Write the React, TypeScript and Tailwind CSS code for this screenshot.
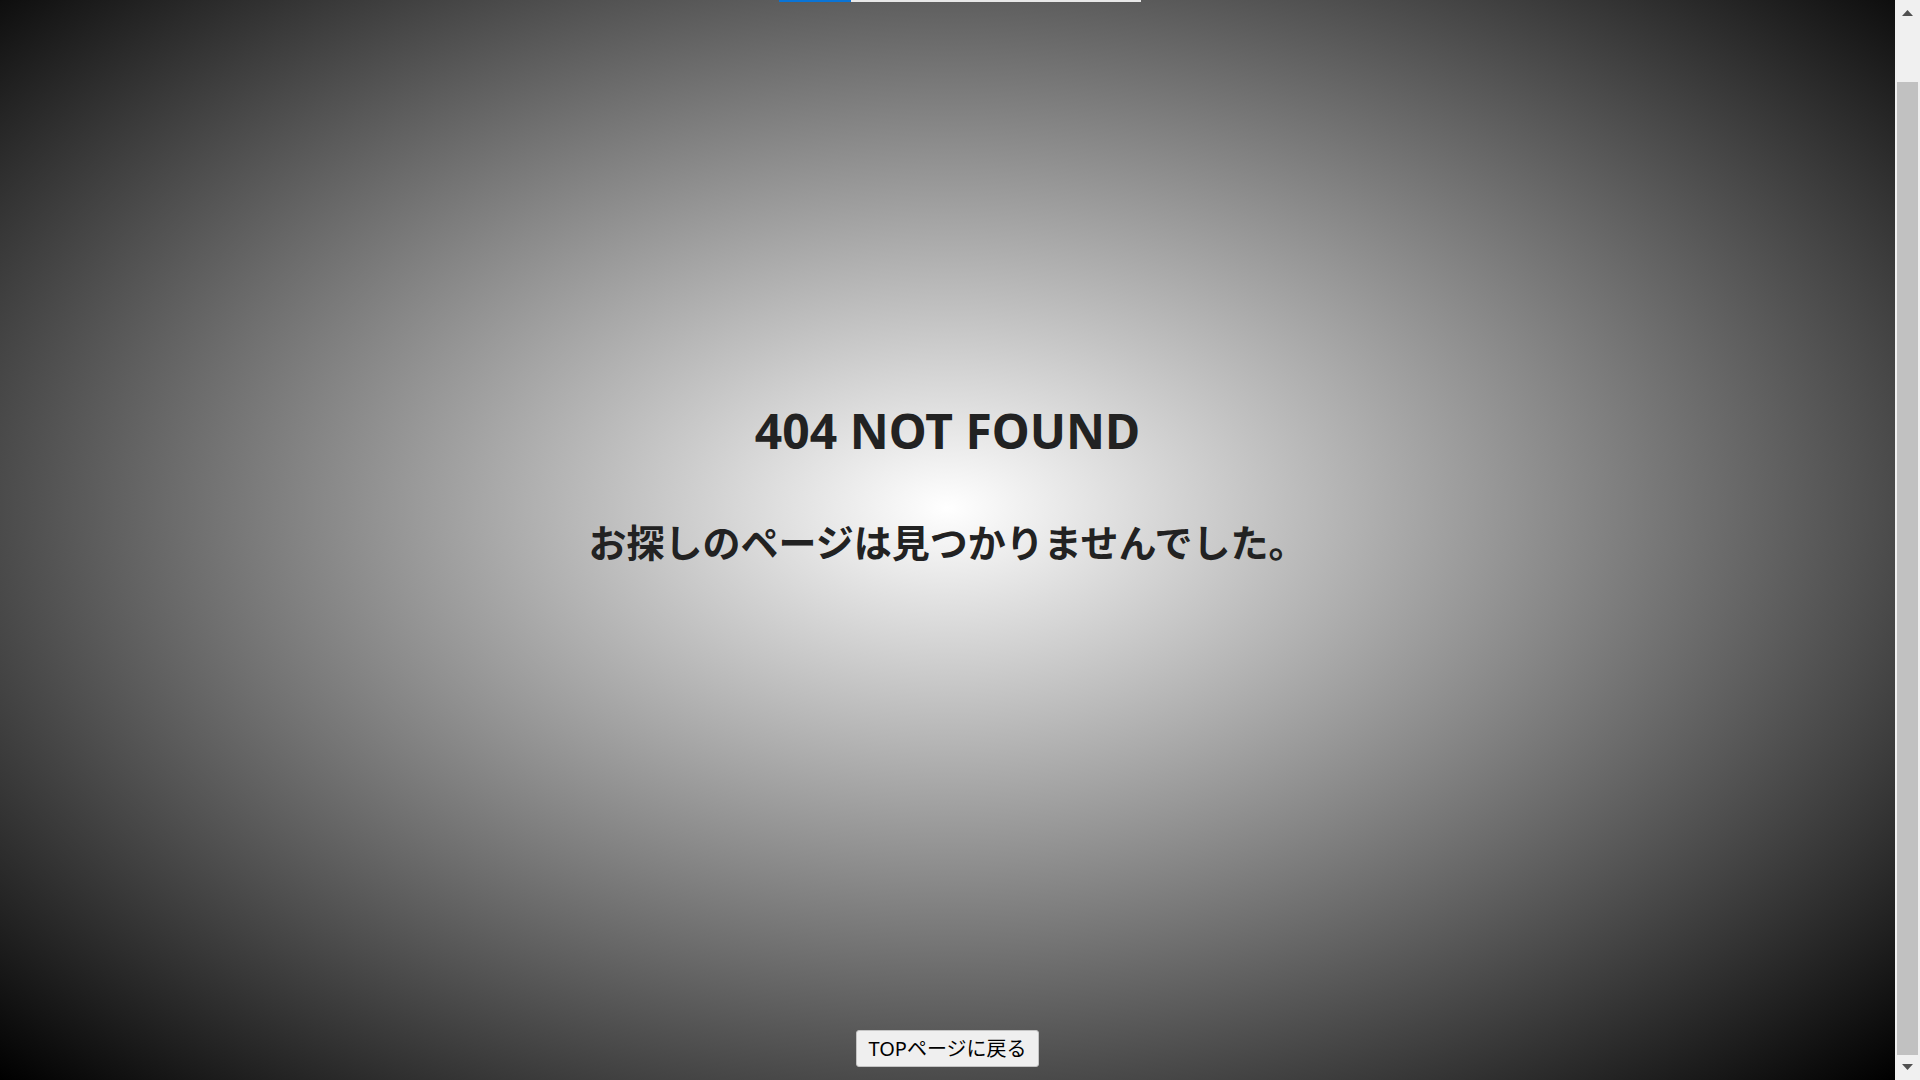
import React from "react";

const ScrollArrow = ({ down }: { down?: boolean }) => (
  <svg width="11" height="6" viewBox="0 0 11 6">
    <polygon
      points={down ? "0,0 11,0 5.5,6" : "5.5,0 11,6 0,6"}
      fill="#505050"
    />
  </svg>
);

const Scrollbar = () => (
  <div className="flex flex-col w-[25px] h-full bg-[#f0f0f0]">
    <div className="h-[25px] flex justify-center pt-[10px]">
      <ScrollArrow />
    </div>
    <div className="flex-1 flex flex-col px-[2px]">
      <div className="mt-[57px] h-[973px] bg-[#c1c1c1]" />
    </div>
    <div className="h-[25px] flex justify-center pt-[9px]">
      <ScrollArrow down />
    </div>
  </div>
);

export default function App() {
  return (
    <div className="flex h-screen w-full overflow-hidden font-['Noto_Sans','Noto_Sans_CJK_JP',sans-serif]">
      <main className="flex-1 flex flex-col items-center bg-[radial-gradient(ellipse_1340px_808px_at_947px_508px,#fff,#000)]">
        <div className="self-start flex h-[2px] ml-[779px]">
          <div className="w-[72px] bg-[#0a74d6]" />
          <div className="w-[290px] bg-[#e8e8e8]" />
        </div>
        <h1 className="mt-[405px] text-[48px] leading-none font-bold text-[#222]">
          404 NOT FOUND
        </h1>
        <p className="mt-[67px] text-[38px] leading-none font-bold text-[#222] font-['Noto_Sans_CJK_JP',sans-serif]">
          お探しのページは見つかりませんでした。
        </p>
        <div className="flex-1" />
        <button className="mb-[13px] h-[37px] px-[11px] bg-[#efefef] border border-[#c4c4c4] rounded-[3px] text-[20px] leading-none text-black">
          TOPページに戻る
        </button>
      </main>
      <Scrollbar />
    </div>
  );
}
